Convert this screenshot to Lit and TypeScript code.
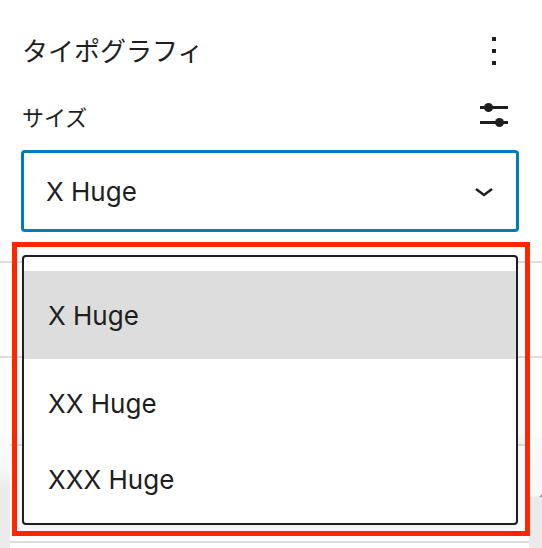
import { LitElement, html, css, svg } from "lit";
import { customElement, state } from "lit/decorators.js";

const SIZES = ["X Huge", "XX Huge", "XXX Huge"];

@customElement("app-root")
export class AppRoot extends LitElement {
  @state() private selected = 0;

  static styles = css`
    :host {
      display: block;
      min-height: 100vh;
      position: relative;
      overflow: hidden;
      background: #fff;
      color: #1e1e1e;
      font-family: Inter, "Noto Sans CJK JP", sans-serif;
    }
    * {
      box-sizing: border-box;
    }
    .panel {
      position: relative;
      padding: 24px 24px 0 22px;
    }
    .row {
      display: flex;
      align-items: center;
      justify-content: space-between;
    }
    .title {
      margin: 0;
      font-size: 26px;
      font-weight: 400;
      line-height: 52px;
      font-family: "Noto Sans CJK JP", sans-serif;
    }
    .label {
      font-size: 22px;
      line-height: 28px;
      font-family: "Noto Sans CJK JP", sans-serif;
    }
    .size-row {
      align-items: flex-start;
      margin: 26px 0 16px;
    }
    .icon-button {
      display: block;
      width: 48px;
      height: 52px;
      padding: 0;
      border: 0;
      background: none;
      color: inherit;
    }
    .settings {
      height: 32px;
    }
    .icon {
      display: block;
      width: 100%;
      height: 100%;
      fill: currentColor;
    }
    .field {
      position: relative;
      margin: 0 -1px;
    }
    .select {
      display: block;
      appearance: none;
      width: 100%;
      height: 82px;
      margin: 0;
      padding: 2px 64px 0 22px;
      border: 3px solid #007cba;
      border-radius: 4px;
      outline: 0;
      background: #fff;
      color: inherit;
      font: 26px/36px Inter, sans-serif;
    }
    .chevron {
      position: absolute;
      right: 11px;
      top: 17px;
      width: 48px;
      height: 48px;
      fill: none;
      stroke: #1e1e1e;
      stroke-width: 2.5;
      pointer-events: none;
    }
    .highlight {
      position: relative;
      margin: 10px -12px 0 -10px;
      padding: 8px 8px 6px;
      border: 5px solid #ff2600;
    }
    .list {
      margin: 0 -1px 0 -3px;
      padding: 14px 0 5px;
      list-style: none;
      background: #fff;
      border: 2px solid #1e1e1e;
      border-radius: 4px;
      box-shadow: 0 4px 12px rgba(0, 0, 0, 0.08);
    }
    .option {
      display: block;
      padding: 20px 24px;
      font-size: 26px;
      line-height: 36px;
    }
    .option[aria-selected="true"] {
      padding: 27px 24px 25px;
      margin-bottom: 7px;
      background: #ddd;
    }
    .backdrop {
      position: absolute;
      inset: 261px 0 0;
      display: grid;
      grid-template-rows: 95px 88px 97px auto;
      background:
        linear-gradient(#fff 175px, #fafafa 176px, #f8f8f8 235px, #ebebeb 236px) right / 50% 100% no-repeat,
        linear-gradient(#fff 175px, #fcfcfc 176px, #f8f8f8 208px, #ebebeb 228px);
    }
    .section {
      border-top: 2px solid #ddd;
    }
    .inset {
      margin: 0 13px 0 10px;
      background: #fff;
    }
    .grip {
      position: absolute;
      right: 0;
      top: 233px;
      width: 3px;
      height: 3px;
      fill: #999;
    }
  `;

  render() {
    return html`
      <div class="backdrop" aria-hidden="true">
        <div class="section"></div>
        <div class="section"></div>
        <div class="section inset"></div>
        <div class="section inset"></div>
        <svg class="grip" viewBox="0 0 3 3"><path d="M0 3l3-3v3z" /></svg>
      </div>
      <section class="panel">
        <header class="row">
          <h2 class="title">タイポグラフィ</h2>
          <button class="icon-button" type="button" aria-label="オプション">
            <svg class="icon" viewBox="0 0 48 52">
              ${[13, 25, 37].map((y) => svg`<rect x="22" y=${y} width="4" height="4" />`)}
            </svg>
          </button>
        </header>
        <div class="row size-row">
          <label class="label" for="size">サイズ</label>
          <button class="icon-button settings" type="button" aria-label="カスタムサイズ">
            <svg class="icon" viewBox="0 0 48 32">
              <path d="M10 4h28v3H10zM10 19h28v3H10z" />
              <circle cx="18.5" cy="5.5" r="4.5" />
              <circle cx="29.5" cy="20.5" r="4.5" />
            </svg>
          </button>
        </div>
        <div class="field">
          <select
            class="select"
            id="size"
            @change=${(e: Event) => (this.selected = (e.target as HTMLSelectElement).selectedIndex)}
          >
            ${SIZES.map((s, i) => html`<option ?selected=${i === this.selected}>${s}</option>`)}
          </select>
          <svg class="chevron" viewBox="0 0 48 48"><path d="M16 22l8 6 8-6" /></svg>
        </div>
        <div class="highlight">
          <ul class="list" role="listbox" aria-label="サイズ">
            ${SIZES.map(
              (s, i) => html`<li
                class="option"
                role="option"
                aria-selected=${i === this.selected ? "true" : "false"}
                @click=${() => (this.selected = i)}
              >${s}</li>`
            )}
          </ul>
        </div>
      </section>
    `;
  }
}
